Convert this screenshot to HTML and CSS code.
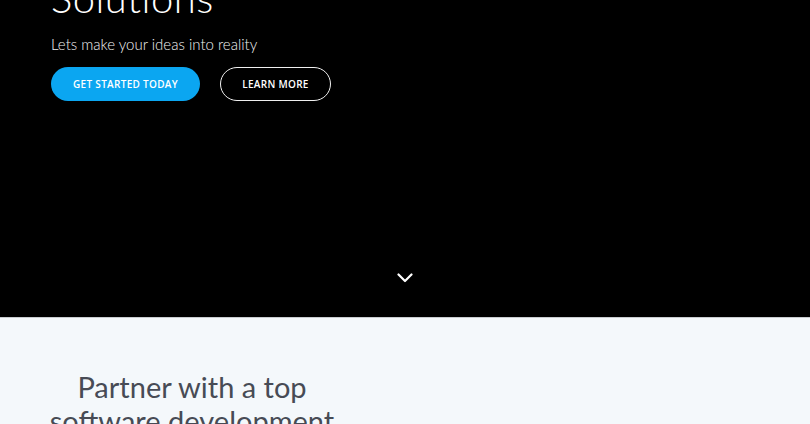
FILE: index.html
```html
<!DOCTYPE html>
<html lang="en">
<head>
<meta charset="utf-8">
<title>Software Solutions</title>
<link rel="stylesheet" href="styles.css">
</head>
<body>
<section class="hero">
  <div class="hero-inner">
    <h1 class="hero-title">Solutions</h1>
    <p class="hero-sub">Lets make your ideas into reality</p>
    <div class="hero-actions">
      <a class="btn btn-primary" href="#">GET STARTED TODAY</a>
      <a class="btn btn-outline" href="#">LEARN MORE</a>
    </div>
  </div>
  <div class="scroll-down">
    <svg width="16" height="10" viewBox="0 0 16 10" aria-hidden="true"><path d="M1.5 1.5 L8 8 L14.5 1.5" fill="none" stroke="#fff" stroke-width="2.2" stroke-linecap="round" stroke-linejoin="round"/></svg>
  </div>
</section>
<section class="partner">
  <div class="partner-grid">
    <h2 class="partner-title">Partner with a top software development company</h2>
    <div></div>
  </div>
</section>
</body>
</html>
```
FILE: styles.css
```css
* { box-sizing: border-box; }
html, body { margin: 0; padding: 0; }
body {
  font-family: "Lato", "Noto Sans", sans-serif;
  background: #f4f8fb;
  overflow: hidden;
}
.hero {
  background: #000;
  height: 318px;
  display: flex;
  flex-direction: column;
  border-bottom: 1px solid #c9ccd0;
}
.hero-inner {
  padding-left: 51px;
  flex: 1;
}
.hero-title {
  margin: -26px 0 0;
  font-size: 40px;
  line-height: 48px;
  font-weight: 300;
  color: #fff;
  letter-spacing: 0.5px;
}
.hero-sub {
  margin: 12px 0 0;
  font-size: 15px;
  line-height: 20px;
  font-weight: 300;
  color: #f2f2f2;
}
.hero-actions {
  display: flex;
  gap: 20px;
  margin-top: 13px;
}
.btn {
  display: inline-flex;
  align-items: center;
  justify-content: center;
  height: 34px;
  border-radius: 17px;
  font-family: "Open Sans", "Noto Sans", sans-serif;
  font-size: 10px;
  font-weight: 600;
  letter-spacing: 0.3px;
  text-decoration: none;
  color: #fff;
}
.btn-primary {
  width: 149px;
  background: #0ba6f1;
}
.btn-outline {
  width: 111px;
  border: 1.5px solid #f0f0f0;
}
.scroll-down {
  display: flex;
  justify-content: center;
  padding-bottom: 34px;
}
.scroll-down svg { display: block; }
.partner-grid {
  display: grid;
  grid-template-columns: 384px 1fr;
  padding-top: 52px;
}
.partner-title {
  margin: 0;
  text-align: center;
  font-size: 29px;
  line-height: 34px;
  font-weight: 400;
  color: #474b55;
  padding: 0 36px;
}
```
